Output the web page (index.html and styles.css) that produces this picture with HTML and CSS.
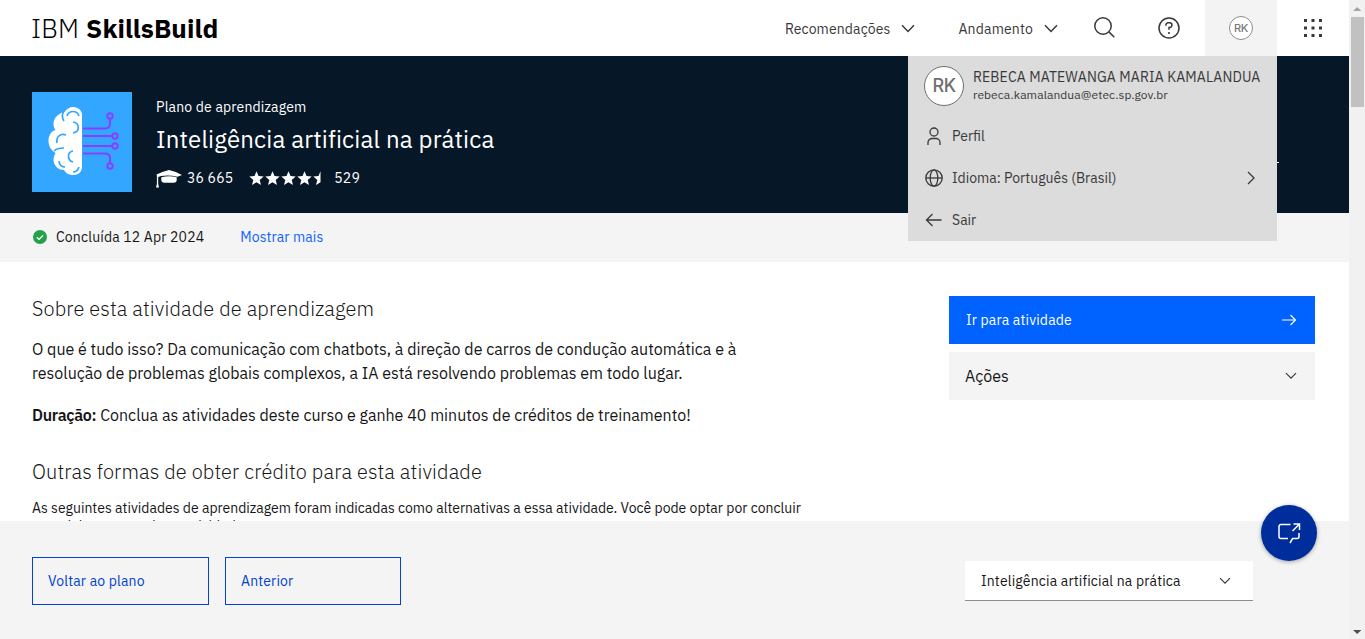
FILE: index.html
```html
<!DOCTYPE html>
<html lang="pt-BR">
<head>
<meta charset="utf-8">
<title>IBM SkillsBuild</title>
<link rel="stylesheet" href="styles.css">
</head>
<body>
<div class="window">
  <div class="page">
    <header class="header">
      <div class="logo"><span class="logo-ibm">IBM</span><span class="logo-name">SkillsBuild</span></div>
      <nav class="nav">
        <a class="nav-item nav-rec"><span>Recomendações</span>
          <svg width="14" height="9" viewBox="0 0 14 9"><path d="M1 1.2 7 7.4 13 1.2"/></svg></a>
        <a class="nav-item nav-and"><span>Andamento</span>
          <svg width="14" height="9" viewBox="0 0 14 9"><path d="M1 1.2 7 7.4 13 1.2"/></svg></a>
        <a class="nav-icon nav-search"><svg width="24" height="24" viewBox="0 0 24 24"><circle cx="10" cy="10" r="8.200"/><path d="m15.900 15.900 5.400 5.400"/></svg></a>
        <a class="nav-icon nav-help"><svg width="24" height="24" viewBox="0 0 24 24"><circle cx="12" cy="12" r="10"/><path d="M8.900 9.700V9a2.200 2.200 0 0 1 2.200-2.200h1.600a2.300 2.300 0 0 1 0 4.600H12v2.300"/><circle class="dot" cx="12" cy="17" r="1.100"/></svg></a>
        <a class="nav-avatar"><span class="avatar-small">RK</span></a>
        <a class="nav-apps"><svg width="20" height="20" viewBox="0 0 20 20"><path d="M1 1h3v3H1zM8.500 1h3v3h-3zM16 1h3v3h-3zM1 8.500h3v3H1zM8.500 8.500h3v3h-3zM16 8.500h3v3h-3zM1 16h3v3H1zM8.500 16h3v3h-3zM16 16h3v3h-3z"/></svg></a>
      </nav>
    </header>

    <section class="hero">
      <svg class="hero-image" width="100" height="100" viewBox="0 0 100 100">
        <path fill="#33a6ff" d="M0 0h100v100H0z"/>
        <path fill="#fff" d="M50 22v54a8 8 0 0 1-8.500 7c-4.500 0-8-2-9.500-5-6 0-10.500-5-10.500-10 0-3 1-5 2-7-4-2.500-7-6.500-7-12 0-6 3-10 7-11-1-1-2-4-2-6 0-6 5-11 11-12 2-3 5-5 9-5s8 3 8.500 7z"/>
        <path fill="none" stroke="#33a6ff" stroke-width="1.700" d="M32 29c-2-3-2-7 0-10M35 24c2-6 10-6 12 0M41 30c7 1 7 10 0 11M25 51c-1-6 3-10 9-8M22 59c2-2 6-3 10-3M41 59c-6 1-6 9 0 11M27 69c0 4 3 6 6 6M41 80c3 0 5-2 6-5"/>
        <g fill="none" stroke="#8a3ffc" stroke-width="1.900"><path d="M51 36.500h22q5 0 5-5V27M51 44h29M51 54h29M51 61.500h22q5 0 5 5V71"/><circle cx="78" cy="24" r="2.700"/><circle cx="83" cy="44" r="2.700"/><circle cx="83" cy="54" r="2.700"/><circle cx="78" cy="74" r="2.700"/></g>
      </svg>
      <div class="hero-text">
        <div class="hero-kind">Plano de aprendizagem</div>
        <h1 class="hero-title">Inteligência artificial na prática</h1>
        <div class="stats">
          <svg width="27" height="20" viewBox="0 0 27 20"><path fill="#fff" d="M.5 6.500Q6 3.500 13 2q7 1.500 13 5l-4.500 1.800Q13 6.500 5 8L2.200 9v7L3 19.500H0L.9 16V8zM5.300 9.200q7.700-2 15.400 0v3.500q-.5 2-3 2H8.300q-2.500 0-3-2z"/></svg>
          <span class="enrolled">36 665</span>
          <svg class="stars" width="74" height="15" viewBox="0 0 74 15"><defs><path id="star" d="m7.500 .3 2 4.800 5.200.4-4 3.400 1.300 5.100-4.500-2.700L3 14l1.300-5.100L.3 5.500l5.200-.4z"/><clipPath id="half"><path d="M64 0h7.500v15H64z"/></clipPath></defs><g fill="#fff"><use href="#star"/><use href="#star" x="16"/><use href="#star" x="32"/><use href="#star" x="48"/><g clip-path="url(#half)"><use href="#star" x="64"/></g></g></svg>
          <span>529</span>
        </div>
      </div>
      <span class="hero-dash"></span>
    </section>

    <section class="status">
      <svg width="16" height="16" viewBox="0 0 16 16"><circle cx="8" cy="8" r="7" fill="#24a148"/><path d="m4.800 8.200 2.300 2.200 4-4" fill="none" stroke="#fff" stroke-width="1.300"/></svg>
      <span class="status-text">Concluída 12 Apr 2024</span>
      <a class="status-more">Mostrar mais</a>
    </section>

    <main class="main">
      <article class="about">
        <h2 class="section-title">Sobre esta atividade de aprendizagem</h2>
        <p class="copy">O que é tudo isso? Da comunicação com chatbots, à direção de carros de condução automática e à<br>resolução de problemas globais complexos, a IA está resolvendo problemas em todo lugar.</p>
        <p class="copy copy-duration"><strong>Duração:</strong> Conclua as atividades deste curso e ganhe 40 minutos de créditos de treinamento!</p>
        <h2 class="section-title section-credit">Outras formas de obter crédito para esta atividade</h2>
        <p class="alternatives">As seguintes atividades de aprendizagem foram indicadas como alternativas a essa atividade. Você pode optar por concluir<br>uma delas em vez desta atividade.</p>
      </article>
      <aside class="actions">
        <a class="go"><span>Ir para atividade</span><svg width="16" height="12" viewBox="0 0 16 12"><path d="M1 6h13.500M9.500 1l5 5-5 5"/></svg></a>
        <div class="more"><span>Ações</span><svg width="12" height="8" viewBox="0 0 12 8"><path d="m1 1.200 5 5 5-5"/></svg></div>
      </aside>
    </main>

    <footer class="footer">
      <a class="outline outline-back">Voltar ao plano</a>
      <a class="outline outline-prev">Anterior</a>
      <div class="select"><span>Inteligência artificial na prática</span><svg width="12" height="8" viewBox="0 0 12 8"><path d="m1 1.200 5 5 5-5"/></svg></div>
    </footer>

    <div class="menu">
      <div class="menu-user">
        <span class="avatar-large">RK</span>
        <div><div class="user-name">REBECA MATEWANGA MARIA KAMALANDUA</div><div class="user-mail">rebeca.kamalandua@etec.sp.gov.br</div></div>
      </div>
      <a class="menu-row"><svg width="20" height="20" viewBox="0 0 20 20"><circle cx="10" cy="6" r="4"/><path d="M4 19v-2.500a4 4 0 0 1 4-4h4a4 4 0 0 1 4 4V19"/></svg><span>Perfil</span></a>
      <a class="menu-row"><svg width="20" height="20" viewBox="0 0 20 20"><circle cx="10" cy="10" r="8.200"/><ellipse cx="10" cy="10" rx="3.800" ry="8.200"/><path d="M1.800 10h16.400"/></svg><span>Idioma: Português (Brasil)</span><svg class="menu-next" width="10" height="14" viewBox="0 0 10 14"><path d="m2 1 6 6-6 6"/></svg></a>
      <a class="menu-row"><svg width="20" height="20" viewBox="0 0 20 20"><path d="M17.500 10h-15M8.500 4l-6 6 6 6"/></svg><span>Sair</span></a>
    </div>

    <a class="chat"><svg width="24" height="24" viewBox="0 0 24 24"><path d="M13.500 3.500H4a2 2 0 0 0-2 2V15.500a2 2 0 0 0 2 2h7M13 22l2.600-4.500H20a2 2 0 0 0 2-2V12M16.500 3h6v6M22.500 3l-7 7"/></svg></a>
  </div>

  <div class="scrollbar">
    <svg width="16" height="17" viewBox="0 0 16 17"><path fill="#a3a3a3" d="m4 11 4.200-4L12.400 11z"/></svg>
    <span class="thumb"></span>
    <svg class="scroll-down" width="16" height="17" viewBox="0 0 16 17"><path fill="#505050" d="m4 8 4.200 4L12.400 8z"/></svg>
  </div>
</div>
</body>
</html>
```
FILE: styles.css
```css
* { box-sizing: border-box; }
body { margin: 0; font: 400 14px/20px "IBM Plex Sans", Roboto, sans-serif; letter-spacing: .16px; color: #161616; background: #fff; }
h1, h2, p { margin: 0; }
svg { display: block; flex: none; fill: none; }
.window { display: flex; height: 639px; overflow: hidden; }
.page { position: relative; width: 1349px; display: flex; flex-direction: column; }

.header { height: 56px; display: flex; justify-content: space-between; color: #393939; }
.header svg { stroke: #393939; stroke-width: 1.5; }
.logo { padding-left: 31px; display: flex; gap: 7px; align-items: center; font-size: 26px; line-height: 56px; color: #000; }
.logo-ibm { font-weight: 300; letter-spacing: .15px; }
.logo-name { font-weight: 700; letter-spacing: .08px; }
.nav { display: flex; align-items: center; }
.nav-item { display: flex; align-items: center; padding-top: 1px; }
.nav-rec { gap: 11px; margin-right: 43px; letter-spacing: .12px; }
.nav-and { gap: 11px; margin-right: 35px; }
.nav-search { margin-right: 40px; }
.nav-help { margin-right: 24px; }
.header .dot { fill: #393939; stroke: none; }
.nav-avatar { width: 72px; height: 56px; background: #f3f3f3; display: flex; align-items: center; justify-content: center; }
.avatar-small { width: 24px; height: 24px; border: 1px solid #8d8d8d; border-radius: 50%; background: #fff; color: #777; font: 500 11px/22px Inter, sans-serif; letter-spacing: -.4px; text-align: center; }
.nav-apps { width: 72px; display: flex; justify-content: center; }
.nav-apps svg { fill: #393939; stroke: none; }

.hero { height: 157px; padding: 36px 32px 0; display: flex; gap: 24px; background: #061727; color: #fff; position: relative; }
.hero-kind { margin-top: 5px; }
.hero-title { margin-top: 6px; font-size: 24px; line-height: 32px; font-weight: 400; letter-spacing: .16px; }
.stats { display: flex; align-items: center; height: 20px; margin-top: 13px; }
.enrolled { margin: 0 16px 0 4px; }
.stars { margin-right: 11px; }
.hero-dash { position: absolute; left: 1270px; top: 106px; width: 9px; height: 1px; background: #fff; }

.status { height: 49px; padding: 0 32px 1px; background: #f4f4f4; display: flex; align-items: center; }
.status-text { margin: 0 36px 0 8px; }
.status-more { color: #0f62fe; letter-spacing: .1px; }

.main { height: 259px; overflow: hidden; padding: 34px 34px 0 32px; display: flex; justify-content: space-between; }
.about { white-space: nowrap; margin-top: -1px; }
.section-title { font-size: 20px; line-height: 28px; font-weight: 300; letter-spacing: .13px; }
.section-credit { margin-top: 31px; }
.copy { margin-top: 14px; font-size: 16px; line-height: 24px; letter-spacing: 0; }
.copy-duration { margin-top: 18px; }
.copy strong { font-weight: 600; letter-spacing: -.3px; }
.alternatives { margin-top: 13px; line-height: 18px; letter-spacing: 0; }
.actions { width: 366px; display: flex; flex-direction: column; gap: 8px; }
.go, .more { height: 48px; display: flex; align-items: center; justify-content: space-between; }
.go { padding: 0 18px 0 17px; background: #0062ff; color: #fff; }
.go svg { stroke: #fff; stroke-width: 1.1; }
.more { padding: 0 18px 0 16px; background: #f4f4f4; font-size: 16px; letter-spacing: 0; }
.more svg, .select svg { stroke: #393939; stroke-width: 1.2; }

.footer { height: 118px; padding: 36px 96px 0 32px; background: #f4f4f4; display: flex; gap: 16px; align-items: flex-start; }
.outline { height: 48px; border: 1px solid #0043ce; color: #0043ce; padding-left: 15px; line-height: 47px; }
.outline-back { width: 177px; }
.outline-prev { width: 176px; }
.select { width: 288px; height: 40px; margin: 4px 0 0 auto; padding: 1px 22px 0 16px; border-bottom: 1px solid #8d8d8d; background: #fff; display: flex; align-items: center; justify-content: space-between; }

.menu { position: absolute; left: 908px; top: 56px; width: 369px; height: 185px; background: #dcdcdc; color: #393939; }
.menu svg { stroke: #393939; stroke-width: 1.3; }
.menu-user { height: 59px; padding: 1px 0 0 16px; display: flex; align-items: center; gap: 9px; white-space: nowrap; }
.avatar-large { width: 40px; height: 40px; border: 1.5px solid #6f6f6f; border-radius: 50%; background: #fff; color: #6f6f6f; font: 500 18px/38px Inter, sans-serif; letter-spacing: -.4px; text-align: center; }
.user-name { letter-spacing: .12px; line-height: 18px; }
.user-mail { font-size: 12px; line-height: 18px; letter-spacing: .07px; }
.menu-row { height: 42px; padding: 0 21px 0 16px; display: flex; align-items: center; gap: 8px; letter-spacing: 0; }
.menu-next { margin-left: auto; }

.chat { position: absolute; left: 1261px; top: 505px; width: 56px; height: 56px; border-radius: 50%; background: #002d9c; display: flex; align-items: center; justify-content: center; box-shadow: 0 1px 4px rgba(0, 0, 0, .35); }
.chat svg { stroke: #fff; stroke-width: 1.5; }

.scrollbar { width: 16px; background: #f1f1f1; display: flex; flex-direction: column; }
.thumb { height: 90px; width: 13px; margin-left: 2px; background: #c1c1c1; }
.scroll-down { margin-top: auto; }
```
